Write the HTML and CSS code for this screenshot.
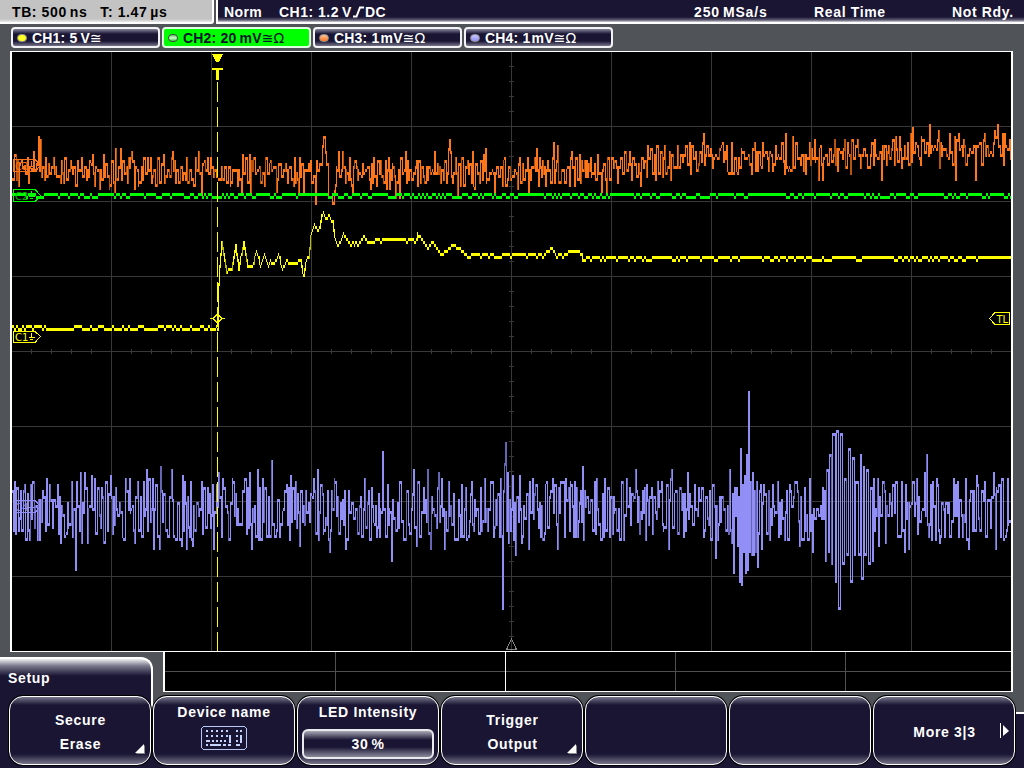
FILE: index.html
```html
<!DOCTYPE html>
<html lang="en">
<head>
<meta charset="utf-8">
<title>Oscilloscope</title>
<link rel="stylesheet" href="styles.css">
</head>
<body>
<div class="screen">
  <header class="status">
    <div class="timebase"><span class="tb">TB: 500<i></i>ns</span><span>T: 1.47<i></i>µs</span></div>
    <div class="trigger">
      <span class="mode">Norm</span>
      <span class="source">CH1: 1.2<i></i>V<svg class="edge" width="13" height="12" viewBox="0 0 13 12"><path d="M1 10.500H4.500L8 1.500H12" fill="none" stroke="#fff" stroke-width="2"/></svg>DC</span>
      <span class="rate">250<i></i>MSa/s</span>
      <span class="acq">Real Time</span>
      <span class="state">Not Rdy.</span>
    </div>
  </header>
  <nav class="channels">
    <div class="channel"><b class="led yellow"></b><span>CH1: 5<i></i>V</span><em>≅</em></div>
    <div class="channel active"><b class="led green"></b><span>CH2: 20<i></i>mV</span><em>≅Ω</em></div>
    <div class="channel"><b class="led orange"></b><span>CH3: 1<i class="hair"></i>mV</span><em>≅Ω</em></div>
    <div class="channel"><b class="led violet"></b><span>CH4: 1<i class="hair"></i>mV</span><em>≅Ω</em></div>
  </nav>
  <main class="plot"><svg id="plot" width="1003" height="601" viewBox="10 51 1003 601">
    <rect x="10" y="51" width="1003" height="601" fill="#000"/>
    <g id="grid" fill="#383838"></g>
    <g id="traces"></g>
    <path d="M217.500 82V651" stroke="#ff0" stroke-dasharray="20 5"/>
    <path d="M212 53.500H223L219 62H216Z" fill="#ff0"/>
    <path d="M212 68H223V70H219V80H216V70H212Z" fill="#ff0"/>
    <path d="M210 318.500H213L217.500 314L222 318.500L217.500 323L213 318.500M222 318.500H225" fill="none" stroke="#ff0"/>
    <g class="tag" fill="none">
      <path d="M13.500 331.500H35L40.500 336.500L35 342.500H13.500Z" stroke="#ff0"/>
      <path d="M13.500 189.500H35L40.500 195.500L35 201.500H13.500Z" stroke="#0f0"/>
      <path d="M13.500 159.500H35L40.500 165.500L35 171.500H13.500Z" stroke="#ff7519"/>
      <path d="M13.500 500.500H35L40.500 506.500L35 512.500H13.500Z" stroke="#918ff5"/>
      <path d="M1009.500 312.500H995L989.500 318.500L995 324.500H1009.500Z" stroke="#ff0"/>
      <path d="M31.500 332.500V337M28.500 337.500H35M30 339.500H33" stroke="#ff0"/>
      <path d="M31.500 191V196M28.500 196.500H35M30 198.500H33" stroke="#0f0"/>
      <path d="M31.500 161V166M28.500 166.500H35M30 168.500H33" stroke="#ff7519"/>
      <path d="M31.500 502V507M28.500 507.500H35M30 509.500H33" stroke="#918ff5"/>
    </g>
    <g class="tag-text"><text x="15" y="340.500" fill="#ff0">C1</text><text x="15" y="199.500" fill="#0b0">C2</text><text x="15" y="169.500" fill="#ff7519">C3</text><text x="15" y="510.500" fill="#918ff5">C4</text><text x="996.500" y="322.500" fill="#ff0">TL</text></g>
    <path d="M506.500 649.500L511.500 639L516.500 649.500Z" fill="none" stroke="#888"/>
    <path d="M10 51H1013V52H10ZM10 51H12V652H10ZM1011 52H1013V652H1011ZM12 651H1011V652H12Z" fill="#fff"/>
  </svg></main>
  <section class="lower">
    <div class="tab">Setup</div>
    <svg class="overview" width="850" height="40" viewBox="0 0 850 40">
      <rect width="850" height="40" fill="#fff"/><rect x="2" width="846" height="39" fill="#000"/>
      <path d="M2 19.500H848M172.500 0V39M512.500 0V39M682.500 0V39" stroke="#505050"/>
      <path d="M342.500 0V39" stroke="#fff"/>
    </svg>
  </section>
  <footer class="softkeys">
    <div class="key"><span>Secure<br>Erase</span><svg class="corner" width="10" height="10"><path d="M1 10L10 1V10Z" fill="#888"/><path d="M0 9L9 0V9Z" fill="#fff"/></svg></div>
    <div class="key top"><span>Device name</span>
      <svg class="keyboard" width="46" height="24" viewBox="0 0 46 24"><rect x=".5" y=".5" width="45" height="23" rx="3.500" fill="none" stroke="#b9c9f7"/>
      <path d="M5 5H29M5 10H29" stroke="#c5d3ff" stroke-width="2" stroke-dasharray="2 3"/><path d="M5 15H9M11 15H13M15 15H17M19 15H21M23 15H25M5 19H7M9 19H20M22 19H25M27 19H30M29 9V17M35 5H37M39 5H41M35 10H37M40 9V17M35 15H37M35 19H39" fill="none" stroke="#c5d3ff" stroke-width="2"/></svg></div>
    <div class="key top"><span>LED Intensity</span><div class="value">30<i></i>%</div></div>
    <div class="key"><span>Trigger<br>Output</span><svg class="corner" width="10" height="10"><path d="M1 10L10 1V10Z" fill="#888"/><path d="M0 9L9 0V9Z" fill="#fff"/></svg></div>
    <div class="key"></div>
    <div class="key"></div>
    <div class="key"><span>More 3|3</span><svg class="next" width="9" height="16"><path d="M.5 0V15" stroke="#fff"/><path d="M3 2L9 8L3 13Z" fill="#fff"/></svg></div>
  </footer>
</div>
<script src="scope.js"></script>
</body>
</html>
```
FILE: styles.css
```css
* { box-sizing: border-box; }
body { margin: 0; background: #505358; color: #fff; font: bold 14px/20px "Liberation Sans", Arial, sans-serif; letter-spacing: .65px; }
i { display: inline-block; width: 3px; }
i.hair { width: 1px; }
.screen { width: 1024px; height: 768px; overflow: hidden; display: flex; flex-direction: column; }
.status { display: flex; gap: 2px; height: 24px; flex: none; white-space: nowrap; }
.timebase { display: flex; gap: 13px; width: 214px; height: 24px; padding: 2px 0 0 12px; color: #000; letter-spacing: .6px; background: linear-gradient(#c3c3c3 19px, #e8e8e8 22px, #fff 22px); border-right: 2px solid #fff; border-radius: 0 0 3px 0; }
.trigger { flex: 1; height: 24px; display: flex; padding: 2px 9px 0 6px; border-left: 2px solid #fff; background: linear-gradient(#191533 17px, #5e5c72 20px, #d6d5dc 22px, #fff 22px); }
.mode { width: 55px; letter-spacing: .4px; }
.source { width: 415px; letter-spacing: .5px; }
.edge { margin: 0 0 -1px; }
.rate { width: 120px; letter-spacing: .85px; }
.acq { width: 138px; }
.state { flex: 1; }
.channels { display: flex; gap: 2px; flex: none; height: 27px; padding: 3px 0 0 11px; }
.channel { width: 149px; height: 21px; display: flex; align-items: center; padding-left: 4px; border: 2px solid #f2f2f5; border-radius: 4px; letter-spacing: .2px; background: linear-gradient(#85849a, #191533 5px, #191533 12px, #77758a); white-space: nowrap; }
.channel span { margin-left: 5px; }
.channel em { font: normal 14px/18px "DejaVu Sans", sans-serif; letter-spacing: 0; }
.channel.active { background: #0f0; color: #07142b; border-color: #e0ffe0; }
.led { width: 10px; height: 8px; border-radius: 4px; border: 1px solid #8a8a8a; }
.yellow { background: #ff2; }
.green { background: linear-gradient(#60c060, #d0ffd0, #30c030); border-color: #444; }
.orange { background: linear-gradient(#ffc29a, #ff7519); }
.violet { background: linear-gradient(#c7c6ff, #918ff5); }
.plot { flex: none; height: 601px; padding-left: 10px; }
.plot svg { display: block; shape-rendering: crispEdges; }
.tag-text { font: normal 10px "DejaVu Sans", sans-serif; letter-spacing: 0; }
.lower { flex: none; height: 44px; display: flex; align-items: flex-start; }
.tab { position: relative; z-index: 1; flex: none; width: 153px; height: 61px; margin-top: 5px; padding: 9px 8px; border-top: 2px solid #fff; border-right: 2px solid #fff; border-radius: 0 12px 0 0; background: linear-gradient(#f0f0f2, #77758a 7px, #191533 17px); }
.overview { margin-left: 10px; flex: none; shape-rendering: crispEdges; }
.softkeys { flex: 1; display: flex; gap: 2px; padding-left: 9px; background: linear-gradient(#505358 16px, #fff 16px, #fff 18px, #191533 18px); }
.key { position: relative; z-index: 2; width: 142px; height: 69px; flex: none; display: flex; flex-direction: column; align-items: center; justify-content: center; text-align: center; line-height: 24px; letter-spacing: .7px; padding: 2px 0 0 1px; border: 1px solid #fff; border-radius: 14px; box-shadow: 0 0 0 1px #000; background: linear-gradient(#77758a, #191533 8px, #191533 57px, #77758a); }
.key.top { justify-content: flex-start; padding: 3px 0 0; }
.keyboard { margin-top: 2px; shape-rendering: crispEdges; }
.value { width: 132px; height: 30px; margin-top: 5px; border: 2px solid #e9e9ee; border-radius: 6px; line-height: 26px; background: linear-gradient(#aaa9b6, #191533 9px, #191533 16px, #8b8a9b); }
.corner { position: absolute; right: 5px; bottom: 10px; }
.next { position: absolute; right: 5px; top: 26px; }
```
FILE: scope.js
```js
const NS = "http://www.w3.org/2000/svg";
const traces = document.getElementById("traces");
const grid = document.getElementById("grid");

function path(parent, d, fill) {
  const p = document.createElementNS(NS, "path");
  p.setAttribute("d", d);
  if (fill) p.setAttribute("fill", fill);
  parent.appendChild(p);
}
const box = (x, y, w, h) => `M${x} ${y}h${w}v${h}h${-w}z`;

// Graticule with the minor ticks on both centre axes
let g = "";
for (let x = 111; x < 1000; x += 100) g += box(x, 52, 1, 599);
for (let y = 126; y < 650; y += 75) g += box(12, y, 999, 1);
for (let x = 31; x < 1010; x += 20) g += box(x, 349, 1, 5);
for (let y = 66; y < 650; y += 15) g += box(509, y, 5, 1);
path(grid, g);

let seed = 7;
const rnd = () => (seed = (seed * 16807) % 2147483647) / 2147483647;
const snap = y => 1 + 3 * Math.round((y - 1) / 3);
const pairs = s => s.trim().split(/\s+/).map(p => p.split(",").map(Number));

function at(keys, x) {
  if (x <= keys[0][0]) return keys[0][1];
  for (let i = 1; i < keys.length; i++) {
    if (x <= keys[i][0]) {
      const [a, b] = keys[i - 1], [c, d] = keys[i];
      return b + (d - b) * (x - a) / (c - a || 1);
    }
  }
  return keys[keys.length - 1][1];
}

// Each pixel column spans the levels of the previous and the current sample;
// neighbouring levels are left unjoined
function draw(ys, x0, color, dim, share) {
  let a = "", b = "";
  for (let i = 0; i < ys.length; i++) {
    let p = i ? ys[i - 1] : ys[i];
    if (Math.abs(p - ys[i]) <= 3) p = ys[i];
    const top = Math.min(p, ys[i]), h = Math.abs(p - ys[i]) + 3;
    if (h > 3 && rnd() < share) b += box(x0 + i, top, 1, h);
    else a += box(x0 + i, top, 1, h);
  }
  path(traces, b, dim);
  path(traces, a, color);
}

function noisy(base, amp, spikes, color, dim, bursts, rate, power) {
  const peak = new Map(spikes.map(([x, y]) => [Math.round(x), y - 1]));
  const ys = [];
  let y = snap(at(base, 12)), side = 1, held = 0;
  for (let x = 12; x < 1011; x++) {
    const burst = bursts.some(([a, b]) => x >= a && x <= b);
    if (peak.has(x)) {
      y = snap(peak.get(x));
      side = y > at(base, x) ? 1 : -1;
      held = 2;
    } else if (!burst && (held > 0 || rnd() < rate)) {
      side = rnd() < .72 ? -side : side;
      y = snap(at(base, x) + side * amp * Math.pow(rnd(), power));
      held = 0;
    } else held++;
    ys.push(y);
  }
  draw(ys, 12, color, dim, .2);
}

function flat(keys, from, to, color, dim, odds) {
  const ys = [];
  let low = 0;
  for (let x = from; x < to; x++) {
    if ((x & 1) === 0 && rnd() < .8) low = rnd() < odds ? 3 : 0;
    ys.push(snap(at(keys, x)) + (at(keys, x) === at(keys, x + 2) ? low : 0));
  }
  draw(ys, from, color, dim, .3);
}

const violet = pairs(`12,490 13,531 20,490 28,531 37,538 46,478 49,484 58,532 57,484 75,570 80,472 81,543 84,472
87,543 91,475 95,534 110,475 112,532 122,535 129,478 134,541 137,481 146,469 149,479 152,478 153,549 159,548 160,466
171,469 182,475 181,546 186,547 192,544 201,481 212,484 213,549 218,472 222,478 228,540 233,481 249,472 251,549
257,469 258,540 271,460 290,475 289,540 299,545 313,480 317,470 329,552 345,548 364,478 382,451 391,561 413,470
416,545 427,470 430,549 438,472 441,478 444,549 460,537 465,487 471,481 473,531 484,478 481,531 491,481 493,537
500,478 501,537 502,609 503,490 504,463 505,442 506,530 507,472 508,543 509,499 510,530 512,475 515,555 519,475
521,543 528,549 532,478 544,534 546,481 552,478 554,484 557,549 564,537 565,479 571,484 575,537 582,466 595,534
596,478 604,478 623,540 629,487 635,469 645,540 651,487 657,481 668,549 671,469 685,531 687,472 702,487 704,531
715,558 729,469 730,531 733,573 734,487 736,487 737,546 738,496 739,580 740,448 741,583 742,484 743,550 744,475
745,573 746,454 747,570 748,391 749,550 750,481 751,555 752,472 753,553 754,490 755,550 756,481 757,567 760,484
761,547 763,484 768,490 769,540 772,484 777,481 778,537 784,540 790,490 797,490 799,546 804,487 812,552 824,490
825,559 826,469 828,552 829,454 831,562 832,433 835,580 836,430 838,607 840,433 842,564 844,478 846,555 848,448
850,580 852,457 854,555 855,481 858,555 860,454 861,577 863,466 864,555 866,469 868,562 870,487 872,561 873,478
877,478 878,546 884,490 885,543 901,481 904,552 908,549 916,478 917,534 924,472 926,454 932,481 937,484 939,543
944,537 953,478 957,481 968,549 976,475 984,481 993,472 995,549 996,487 1006,531 1007,478`);
noisy([[12, 509], [1010, 509]], 31, violet, "#918ff5", "#6664b4", [[824, 873]], .66, 1.1);

const orange = pairs(`18,186 28,183 33,152 38,136 40,139 41,177 53,157 60,182 63,183 70,161 76,186 77,160 92,154
99,187 103,155 109,189 114,190 115,148 120,148 131,151 134,187 138,186 150,158 152,177 159,183 172,151 175,181
185,180 186,159 198,151 201,193 210,157 220,179 231,183 241,193 242,154 250,193 259,166 264,186 270,160 276,190
285,163 287,183 294,157 298,195 303,195 308,164 310,160 315,203 321,163 322,145 323,136 325,152 326,163 328,196
331,198 332,204 334,190 338,151 342,151 345,182 349,157 352,192 353,166 362,163 370,188 377,160 380,160 386,187
388,157 389,188 392,163 395,196 399,197 405,151 407,161 412,180 416,160 420,183 427,180 434,151 440,181 443,180
448,150 449,139 450,151 452,183 457,194 462,157 468,172 472,151 474,188 483,155 485,148 488,179 492,169 494,194
504,157 517,188 519,157 528,190 536,150 538,185 545,185 553,143 557,145 569,185 571,152 580,183 586,160 601,192
606,195 612,158 617,182 629,151 631,178 640,184 647,146 655,180 664,146 670,178 677,147 689,142 690,172 703,134
712,166 722,142 730,172 737,172 741,150 751,172 757,170 761,166 762,142 772,169 784,172 785,133 792,136 800,163
805,172 814,139 818,178 820,145 822,178 834,139 837,169 844,139 850,172 857,139 860,166 867,166 881,178 888,145
895,136 899,136 901,166 910,134 912,129 918,155 920,163 929,124 938,130 939,166 948,157 955,178 958,133 975,180
984,133 992,154 994,132 997,124 1003,165 1009,140`);
noisy([[12, 167], [60, 169], [500, 171], [600, 167], [700, 156], [830, 156], [900, 149], [1010, 147]], 15,
  orange, "#ff7519", "#b5530f", [[320, 334]], .4, 1.5);

flat([[12, 193], [1010, 193]], 12, 1011, "#0f0", "#0a0", .33);
flat([[12, 325], [216, 325]], 12, 217, "#ff0", "#bb0", .6);

const yellow = pairs(`217,328 218,282 219,266 221,241 225,265 226,268 231,268 235,245 238,268 243,241 247,265 252,265
256,249 260,265 264,253 268,265 270,260 274,262 278,253 282,268 286,259 290,262 300,260 303,275 305,262 308,255
310,236 312,228 314,224 317,229 319,227 321,214 323,211 325,214 329,214 332,221 334,234 337,244 340,240 343,232
347,239 350,241 356,241 358,244 361,239 364,235 368,241 380,238 412,238 415,241 417,233 421,237 427,247 432,241
437,248 441,253 447,249 452,244 459,247 463,251 468,256 475,252 545,252 551,247 555,252 567,252 572,249 578,250
582,255 625,255 626,256 1010,256`);
flat(yellow, 217, 1011, "#ff0", "#bb0", .3);
```
